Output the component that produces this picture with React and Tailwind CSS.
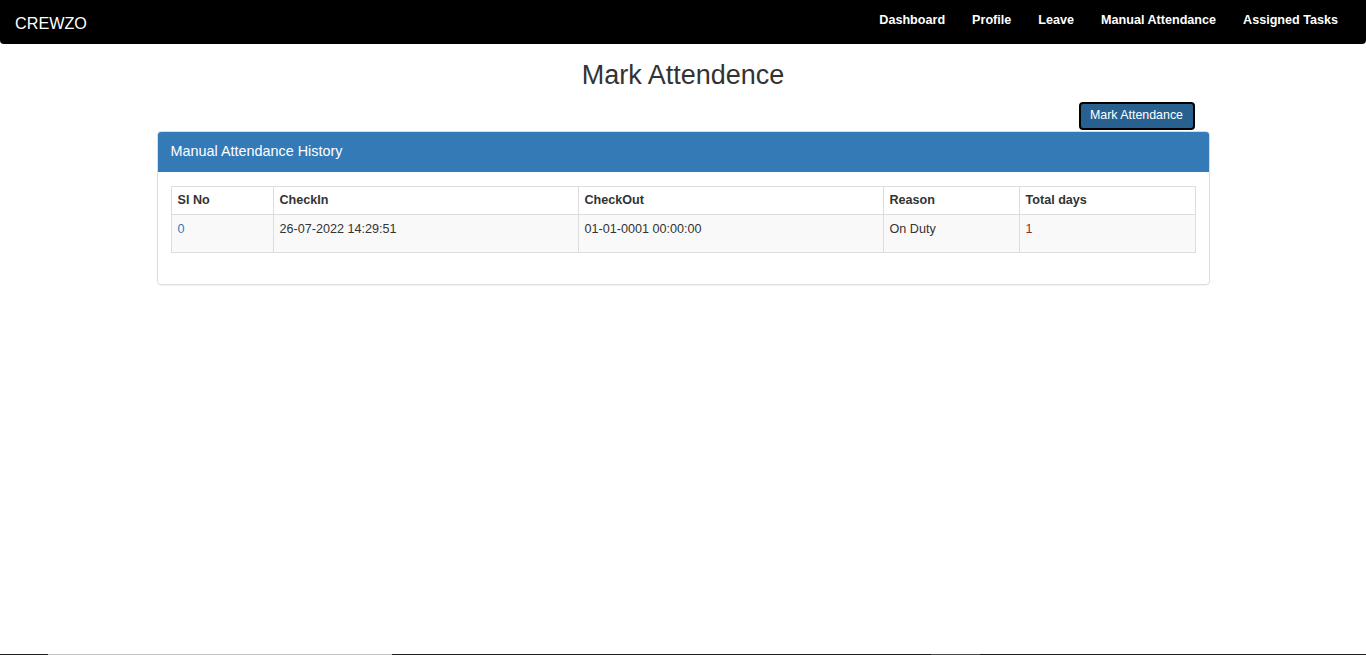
import React from 'react';

const NAV_LINKS = ['Dashboard', 'Profile', 'Leave', 'Manual Attendance', 'Assigned Tasks'];

const COLUMNS = [
  { label: 'Sl No', width: 'w-[102px]' },
  { label: 'CheckIn', width: 'w-[305px]' },
  { label: 'CheckOut', width: 'w-[305px]' },
  { label: 'Reason', width: 'w-[136px]' },
  { label: 'Total days', width: '' },
];

const ROWS = [
  { sl: '0', checkIn: '26-07-2022 14:29:51', checkOut: '01-01-0001 00:00:00', reason: 'On Duty', total: '1' },
];

function Navbar() {
  return (
    <nav className="flex h-[44px] items-center justify-between rounded-b-[4px] bg-black pl-[15px] pr-[28px] text-white">
      <span className="pt-[2px] text-[16.2px]">CREWZO</span>
      <ul className="flex gap-[27px] pb-[4px] text-[12.6px] font-bold">
        {NAV_LINKS.map((link) => (
          <li key={link}>{link}</li>
        ))}
      </ul>
    </nav>
  );
}

export default function App() {
  return (
    <div
      className="flex h-[655px] flex-col bg-white text-[#333]"
      style={{ fontFamily: '"Liberation Sans", Arial, sans-serif' }}
    >
      <Navbar />

      <main className="flex-1">
        <h2 className="mt-[17px] text-center text-[27px] leading-[1.1]">Mark Attendence</h2>

        <div className="mx-auto w-[1053px]">
          <div className="mt-[11px] flex h-[28px] justify-end pr-[15px]">
            <button className="h-[28px] w-[116px] rounded-[4px] border-2 border-black bg-[#286090] text-[12.4px] leading-none text-white">
              Mark Attendance
            </button>
          </div>

          <div className="mt-[1px] rounded-[4px] border border-[#ddd] shadow-[0_1px_1px_rgba(0,0,0,0.05)]">
            <div className="flex h-[40px] items-center rounded-t-[3px] border-b border-[#337ab7] bg-[#337ab7] px-[13px] pt-[2px] text-[14.4px] text-white">
              Manual Attendance History
            </div>
            <div className="px-[13px] pb-[31px] pt-[14px]">
              <table className="w-full border-collapse border border-[#ddd] text-left text-[12.6px]">
                <thead>
                  <tr>
                    {COLUMNS.map((col) => (
                      <th
                        key={col.label}
                        className={`h-[28px] border border-[#ddd] px-[6px] font-bold ${col.width}`}
                      >
                        {col.label}
                      </th>
                    ))}
                  </tr>
                </thead>
                <tbody>
                  {ROWS.map((row) => (
                    <tr key={row.sl} className="h-[38px] bg-[#f9f9f9]">
                      <td className="border border-[#ddd] px-[6px] pt-[5px] align-top text-[#337ab7]">{row.sl}</td>
                      <td className="border border-[#ddd] px-[6px] pt-[5px] align-top">{row.checkIn}</td>
                      <td className="border border-[#ddd] px-[6px] pt-[5px] align-top">{row.checkOut}</td>
                      <td className="border border-[#ddd] px-[6px] pt-[5px] align-top">{row.reason}</td>
                      <td className="border border-[#ddd] px-[6px] pt-[5px] align-top text-[#952a2a]">{row.total}</td>
                    </tr>
                  ))}
                </tbody>
              </table>
            </div>
          </div>
        </div>
      </main>

      <div className="flex h-px">
        <div className="w-[48px] bg-[#1e1e1e]" />
        <div className="w-[344px] bg-[#c4c4c4]" />
        <div className="w-[539px] bg-[#1e1e1e]" />
        <div className="w-[49px] bg-[#4a4a4a]" />
        <div className="flex-1 bg-[#1e1e1e]" />
      </div>
    </div>
  );
}
